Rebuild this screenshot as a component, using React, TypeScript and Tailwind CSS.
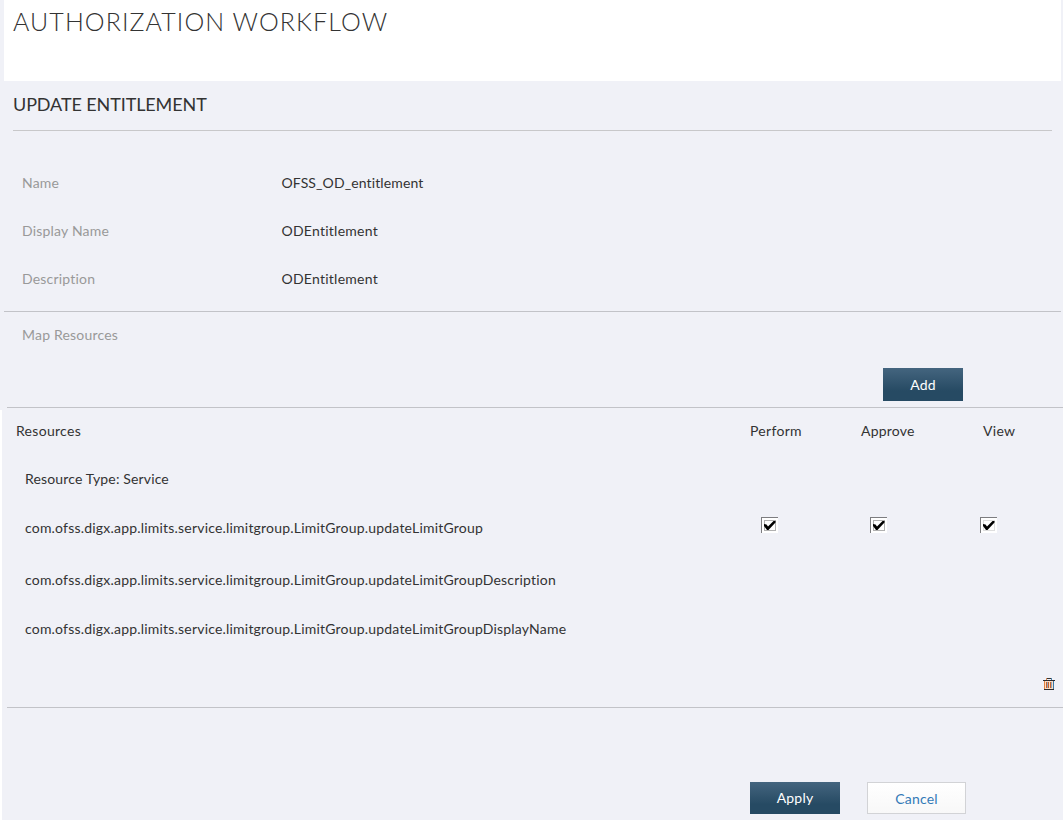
import React from 'react';

const details = [
  { label: 'Name', value: 'OFSS_OD_entitlement', tracking: 'tracking-[0.12px]' },
  { label: 'Display Name', value: 'ODEntitlement', tracking: 'tracking-[0.25px]' },
  { label: 'Description', value: 'ODEntitlement', tracking: 'tracking-[0.25px]' },
];

function Check({ box }: { box: string }) {
  return (
    <svg width="17" height="16" viewBox="0 0 17 16" shapeRendering="crispEdges" className="block">
      <rect width="17" height="16" fill="#fff" />
      <path d="M0 0.5H17M0.5 0V16" stroke="#7d7d80" fill="none" />
      <rect x="3.5" y="3.5" width="11" height="10" stroke={box} fill="#fff" />
      <path d="M3 7L5.5 7.5L7 9.5L12.5 4H14.5V5.5L7.5 13H6L3 9Z" fill="#000" shapeRendering="auto" />
    </svg>
  );
}

function Trash() {
  return (
    <svg width="12" height="13" viewBox="0 0 12 13" shapeRendering="crispEdges" className="block">
      <path d="M4 1.5H8" stroke="#333" />
      <path d="M3.5 1V3" stroke="#d98a55" />
      <path d="M8.5 1V3" stroke="#4a7fa8" />
      <path d="M0 3.5H12" stroke="#2b2b2e" />
      <rect x="2" y="4" width="8" height="8" fill="#fbdcc2" />
      <path d="M1.5 4V12" stroke="#e0823f" />
      <path d="M10.5 4V12" stroke="#3978a8" />
      <path d="M3.5 5V11M5.5 5V11M7.5 5V11" stroke="#c9602c" />
      <path d="M4.5 5V11M8.5 5V11" stroke="#8fa9bd" />
      <path d="M1 12.5H11" stroke="#2b2b2e" />
    </svg>
  );
}

export default function App() {
  return (
    <div className="flex h-[822px] w-[1063px] flex-col overflow-hidden bg-white font-['Lato',sans-serif] text-[14px] leading-5 tracking-[0.2px] text-[#333]">
      <div className="flex h-[410px] flex-col bg-[#f0f1f7]">
        <header className="ml-1 mr-[2px] h-[81px] bg-white pl-[9px] pt-[5px]">
          <h1 className="text-[25px] font-light leading-8 tracking-[1.08px]">AUTHORIZATION WORKFLOW</h1>
        </header>
        <div className="ml-[13px] mr-[11px] h-[50px] border-b border-[#c8c8ca] pt-[11px]">
          <h2 className="text-[18px] leading-6 tracking-[-0.1px]">UPDATE ENTITLEMENT</h2>
        </div>
        <section className="ml-1 mr-[2px] h-[181px] border-b border-[#c2c3c8] pl-[18px] pt-[42px]">
          {details.map((d) => (
            <div key={d.label} className="flex h-12">
              <span className="w-[259.5px] text-[#999]">{d.label}</span>
              <span className={d.tracking}>{d.value}</span>
            </div>
          ))}
        </section>
        <div className="h-[56px] pl-[22px] pt-[13px] text-[#999]">Map Resources</div>
        <div className="ml-[7px] flex h-[40px] justify-end border-b border-[#c2c3c8] pr-[100px]">
          <button className="h-[33px] w-20 bg-linear-to-b from-[#44657f] to-[#264a63] to-70% text-white">Add</button>
        </div>
      </div>
      <div className="ml-[2px] flex h-[410px] flex-col bg-[#f0f1f7]">
        <section className="ml-[5px] h-[298px] border-b border-[#c2c3c8]">
          <div className="flex pl-[9px] pt-[11px] tracking-[0.3px]">
            <span className="w-[734px]">Resources</span>
            <span className="w-[111px]">Perform</span>
            <span className="w-[122px] tracking-[0.2px]">Approve</span>
            <span>View</span>
          </div>
          <div className="pl-[18px] pt-7 tracking-[0.15px]">Resource Type: Service</div>
          <div className="flex pl-[18px] pt-[28px]">
            <span className="w-[736px] pt-[1px]">com.ofss.digx.app.limits.service.limitgroup.LimitGroup.updateLimitGroup</span>
            <span className="w-[109px]"><Check box="#b0b0b0" /></span>
            <span className="w-[110px]"><Check box="#b0b0b0" /></span>
            <Check box="#dedede" />
          </div>
          <div className="pl-[18px] pt-[32px]">com.ofss.digx.app.limits.service.limitgroup.LimitGroup.updateLimitGroupDescription</div>
          <div className="pl-[18px] pt-[29px]">com.ofss.digx.app.limits.service.limitgroup.LimitGroup.updateLimitGroupDisplayName</div>
          <div className="flex justify-end pr-2 pt-[38px]"><Trash /></div>
        </section>
        <div className="flex gap-[27px] pl-[748px] pt-[74px]">
          <button className="h-8 w-[90px] bg-linear-to-b from-[#44657f] to-[#264a63] to-70% text-white">Apply</button>
          <button className="h-8 w-[99px] border border-[#d2d3d6] bg-linear-to-b from-white to-[#f8f8f8] pt-[2px] text-[#337ab7]">Cancel</button>
        </div>
      </div>
    </div>
  );
}
